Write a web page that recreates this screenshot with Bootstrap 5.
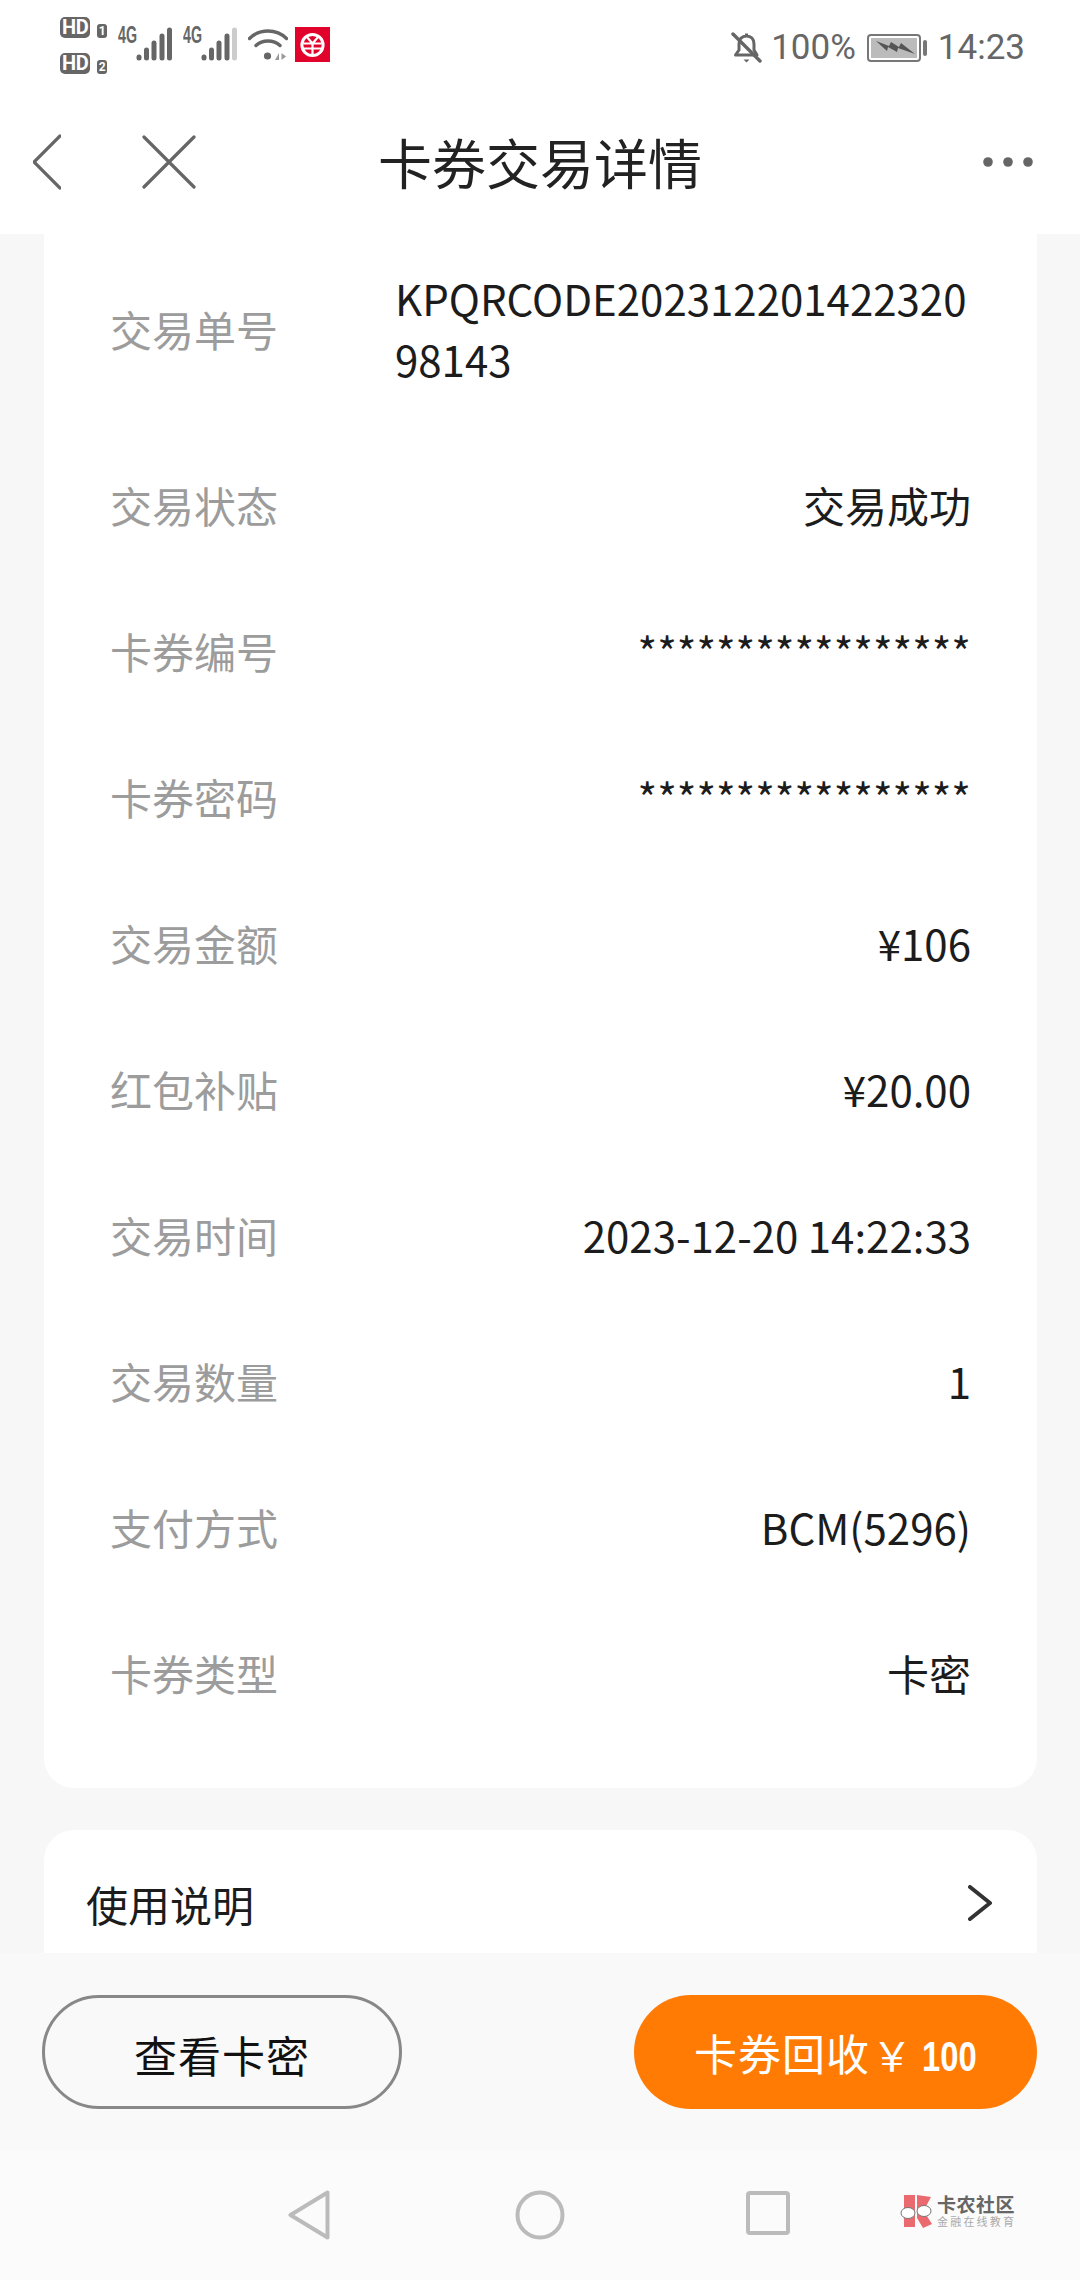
<!DOCTYPE html>
<html lang="zh-CN">
<head>
    <meta charset="UTF-8">
    <meta name="viewport" content="width=device-width, initial-scale=1.0">
    <title>卡券交易详情</title>
    <link href="https://cdn.jsdelivr.net/npm/bootstrap@5.3.0/dist/css/bootstrap.min.css" rel="stylesheet">
    <style>
        html, body { width: 1080px; height: 2280px; overflow: hidden; }
        body { font-family: "Noto Sans CJK SC", "Liberation Sans", sans-serif; background: #f7f7f7; color: #1c1c1c; }
        .page-wrap { height: 2280px; }

        /* status bar */
        .status-bar { height: 90px; padding: 17px 55px 0 60px; color: #666; font-family: Roboto, sans-serif; font-size: 35px; line-height: 1; }
        .hd-col { width: 47px; gap: 15px; margin-right: 11px; }
        .hd-line { height: 21px; gap: 7px; }
        .hd-tag { width: 31px; height: 21px; line-height: 21px; background: #666; color: #fff; border-radius: 5px; font-size: 20px; font-weight: 700; letter-spacing: -.5px; text-align: center; overflow: visible; }
        .hd-num { width: 10px; height: 14px; line-height: 14px; margin-top: 6px; background: #666; color: #fff; border-radius: 3px; font-size: 12px; font-weight: 700; text-align: center; }
        .status-left svg { display: block; margin-top: 10px; }
        .status-left .sig-icon { margin-top: 4px; margin-right: 10px; }
        .wifi-icon { margin-right: 7px; }
        .status-right { margin-top: 13px; }
        .pct-text { margin: 0 11px 0 8px; }
        .time-text { margin-left: 11px; }

        /* title bar */
        .title-bar { height: 144px; padding: 0 47px; }
        .title-side { flex: 1 1 0; gap: 81px; }
        .title-left { margin-left: -14px; margin-right: 14px; }
        .title-text { font-size: 54px; line-height: 1; color: #222; }

        /* scrolled content */
        .scroll-inner { margin-top: -39px; padding: 0 43px 0 44px; }
        .info-panel { border-radius: 30px; padding-top: 30px; padding-bottom: 43px; margin-bottom: 42px; }
        .info-row { height: 146px; padding: 0 66px 0 66px; font-size: 42px; line-height: 61px; }
        .info-row.tall-row { height: 206px; }
        .info-label { color: #9c9c9c; width: 285px; flex-shrink: 0; }
        .info-value { flex-grow: 1; text-align: right; word-break: break-all; min-width: 0; }
        .info-value.wrap-value { text-align: left; }
        .usage-panel { border-radius: 30px 30px 0 0; height: 146px; padding: 0 44px 0 42px; font-size: 42px; }

        /* bottom actions */
        .action-bar { height: 197px; background: #f9f9f9; padding: 42px 43px 0 42px; }
        .pill-btn { height: 114px; border-radius: 57px; font-size: 43px; line-height: 1; letter-spacing: 1px; padding: 5px 0 0; }
        .pill-outline { width: 360px; background: transparent; border: 3px solid #888; color: #111; }
        .pill-orange { width: 403px; background: #ff7b04; border: 0; color: #fff; }
        .pill-orange:hover, .pill-orange:active { background: #ff7b04; color: #fff; }
        .yen-sign { margin: 0 9px 0 2px; font-size: 40px; }
        .amount-text { display: inline-block; font-family: "Liberation Sans", sans-serif; font-weight: 700; font-size: 42px; letter-spacing: 0; transform: scaleX(.78); transform-origin: left center; margin-right: -15px; }

        /* system nav */
        .sys-nav { height: 130px; background: #fbfbfb; padding: 40px 0 0 288px; }
        .nav-home { margin-left: 185px; }
        .nav-recent { margin-left: 181px; }
        .logo-wrap { margin-left: 109px; margin-top: 3px; gap: 4px; }
        .logo-names { line-height: 1; }
        .logo-main { font-size: 19px; font-weight: 700; color: #666; letter-spacing: .5px; line-height: 21px; }
        .logo-sub { font-size: 11px; color: #aaa; letter-spacing: 2.2px; line-height: 14px; }
    </style>
</head>
<body>
<div class="page-wrap d-flex flex-column">

    <!-- Header -->
    <header class="bg-white flex-shrink-0 position-relative z-1">
        <div class="status-bar d-flex justify-content-between align-items-start">
            <div class="status-left d-flex align-items-start">
                <div class="hd-col d-flex flex-column">
                    <div class="hd-line d-flex align-items-center"><span class="hd-tag">HD</span><span class="hd-num">1</span></div>
                    <div class="hd-line d-flex align-items-center"><span class="hd-tag">HD</span><span class="hd-num">2</span></div>
                </div>
                <svg class="sig-icon" width="55" height="42" viewBox="0 -6 55 42">
                    <text x="0" y="16" font-family="Liberation Sans, sans-serif" font-size="23" font-weight="700" fill="#666" textLength="19" lengthAdjust="spacingAndGlyphs">4G</text>
                    <g stroke="#666" stroke-width="5" stroke-linecap="round">
                        <line x1="21" y1="31" x2="21" y2="30"/><line x1="28.500" y1="31" x2="28.500" y2="23"/><line x1="36" y1="31" x2="36" y2="16"/><line x1="44" y1="31" x2="44" y2="9"/><line x1="51.500" y1="31" x2="51.500" y2="3"/>
                    </g>
                </svg>
                <svg class="sig-icon" width="55" height="42" viewBox="0 -6 55 42">
                    <text x="0" y="16" font-family="Liberation Sans, sans-serif" font-size="23" font-weight="700" fill="#666" textLength="19" lengthAdjust="spacingAndGlyphs">4G</text>
                    <g stroke="#666" stroke-width="5" stroke-linecap="round">
                        <line x1="21" y1="31" x2="21" y2="30"/><line x1="28.500" y1="31" x2="28.500" y2="23"/><line x1="36" y1="31" x2="36" y2="16"/><line x1="44" y1="31" x2="44" y2="9"/>
                    </g>
                    <line x1="51.500" y1="31" x2="51.500" y2="3" stroke="#ccc" stroke-width="5" stroke-linecap="round"/>
                </svg>
                <svg class="wifi-icon" width="40" height="36" viewBox="0 0 40 36">
                    <g fill="none" stroke="#666" stroke-width="3.400" stroke-linecap="round">
                        <path d="M1.500 11.500C11.500 1.500 28.500 1.500 38.500 11.500"/>
                        <path d="M8 18.500C14.500 12.500 25.500 12.500 32 18.500"/>
                    </g>
                    <circle cx="19.500" cy="29" r="3.600" fill="#666"/>
                    <path d="M27 33h4v-7zM33.500 26v7l4.500-3.500z" fill="#999"/>
                </svg>
                <svg width="35" height="35" viewBox="0 0 35 35">
                    <rect width="35" height="35" fill="#e2032d"/>
                    <circle cx="17.500" cy="18" r="10.600" fill="none" stroke="#fff" stroke-width="3"/>
                    <path d="M11.500 9.500l6 7 6-7M8.500 16.500h18M8.500 21.500h18M17.500 16.500v11" fill="none" stroke="#fff" stroke-width="2.200"/>
                </svg>
            </div>
            <div class="status-right d-flex align-items-center">
                <svg width="32" height="34" viewBox="0 0 32 34">
                    <path d="M15.500 2.500v2M8 13c0-5 3-8 7.500-8s7.500 3 7.500 8v6l3 5H4.500l3.500-5z" fill="none" stroke="#666" stroke-width="3" stroke-linejoin="round"/>
                    <path d="M12.500 28.500h6l-3 3z" fill="#666"/>
                    <line x1="2" y1="3" x2="29" y2="30" stroke="#666" stroke-width="3.400" stroke-linecap="round"/>
                </svg>
                <span class="pct-text">100%</span>
                <svg width="60" height="28" viewBox="0 0 60 28">
                    <rect x="1" y="1" width="52" height="26" rx="3" fill="none" stroke="#777" stroke-width="2"/>
                    <rect x="4" y="4" width="46" height="20" fill="#bbb"/>
                    <rect x="56" y="6" width="4" height="16" rx="2" fill="#777"/>
                    <path d="M9 7l13 5 2-4 8 5 2-4 14 11-17-6-1 4-9-5-1 4z" fill="#555"/>
                </svg>
                <span class="time-text">14:23</span>
            </div>
        </div>
        <nav class="title-bar d-flex align-items-center">
            <div class="title-side title-left d-flex align-items-center">
                <svg width="28" height="56" viewBox="0 0 28 56">
                    <path d="M27 2L1 28l26 26" fill="none" stroke="#666" stroke-width="3.200" stroke-linecap="round" stroke-linejoin="miter"/>
                </svg>
                <svg width="54" height="54" viewBox="0 0 54 54">
                    <path d="M2 2l50 50M52 2L2 52" fill="none" stroke="#666" stroke-width="3.200" stroke-linecap="round"/>
                </svg>
            </div>
            <div class="title-text">卡券交易详情</div>
            <div class="title-side d-flex justify-content-end">
                <svg width="50" height="10" viewBox="0 0 50 10">
                    <circle cx="5" cy="5" r="4.800" fill="#666"/><circle cx="25" cy="5" r="4.800" fill="#666"/><circle cx="45" cy="5" r="4.800" fill="#666"/>
                </svg>
            </div>
        </nav>
    </header>

    <!-- Details -->
    <main class="flex-grow-1 overflow-hidden">
        <div class="scroll-inner">
            <div id="infoPanel" class="info-panel bg-white"></div>
            <div class="usage-panel bg-white d-flex justify-content-between align-items-center">
                <span>使用说明</span>
                <svg width="26" height="36" viewBox="0 0 26 36">
                    <path d="M3 2l20 16L3 34" fill="none" stroke="#333" stroke-width="4" stroke-linecap="round" stroke-linejoin="round"/>
                </svg>
            </div>
        </div>
    </main>

    <!-- Bottom buttons -->
    <div class="action-bar flex-shrink-0 d-flex justify-content-between align-items-start">
        <button type="button" class="btn pill-btn pill-outline">查看卡密</button>
        <button type="button" class="btn pill-btn pill-orange">卡券回收<span class="yen-sign">￥</span><span class="amount-text">100</span></button>
    </div>

    <!-- System nav -->
    <div class="sys-nav flex-shrink-0 d-flex align-items-start">
        <svg width="42" height="50" viewBox="0 0 42 50">
            <path d="M39.500 2.500v45L2.500 25z" fill="none" stroke="#bbb" stroke-width="4" stroke-linejoin="round"/>
        </svg>
        <svg class="nav-home" width="50" height="50" viewBox="0 0 50 50">
            <circle cx="25" cy="25" r="22.500" fill="none" stroke="#bbb" stroke-width="4"/>
        </svg>
        <svg class="nav-recent" width="44" height="46" viewBox="0 0 44 46">
            <rect x="2" y="3" width="40" height="40" rx="2" fill="none" stroke="#bbb" stroke-width="4"/>
        </svg>
        <div class="logo-wrap d-flex align-items-center">
            <svg width="34" height="34" viewBox="0 0 34 34">
                <path d="M5 1h11v32H5zM18 1l14 2-7 13h-7zM18 19h8l7 11-9 4-6-10z" fill="#ea6a70"/>
                <ellipse cx="9" cy="19" rx="7" ry="5.500" fill="#fff" stroke="#777" stroke-width="1"/>
                <ellipse cx="25" cy="17" rx="7" ry="5.500" fill="#fff" stroke="#777" stroke-width="1"/>
            </svg>
            <div class="logo-names">
                <div class="logo-main">卡农社区</div>
                <div class="logo-sub">金融在线教育</div>
            </div>
        </div>
    </div>
</div>

<script src="https://cdn.jsdelivr.net/npm/bootstrap@5.3.0/dist/js/bootstrap.bundle.min.js"></script>
<script>
    // строки карточки
    const rows = [
        ['交易单号', 'KPQRCODE20231220142232098143', 'wrap-value'],
        ['交易状态', '交易成功'],
        ['卡券编号', '*****************'],
        ['卡券密码', '*****************'],
        ['交易金额', '¥106'],
        ['红包补贴', '¥20.00'],
        ['交易时间', '2023-12-20 14:22:33'],
        ['交易数量', '1'],
        ['支付方式', 'BCM(5296)'],
        ['卡券类型', '卡密']
    ];
    document.getElementById('infoPanel').innerHTML = rows.map(r => `
        <div class="info-row d-flex align-items-center ${r[2] ? 'tall-row' : ''}">
            <div class="info-label">${r[0]}</div>
            <div class="info-value ${r[2] || ''}">${r[1]}</div>
        </div>`).join('');
</script>
</body>
</html>
